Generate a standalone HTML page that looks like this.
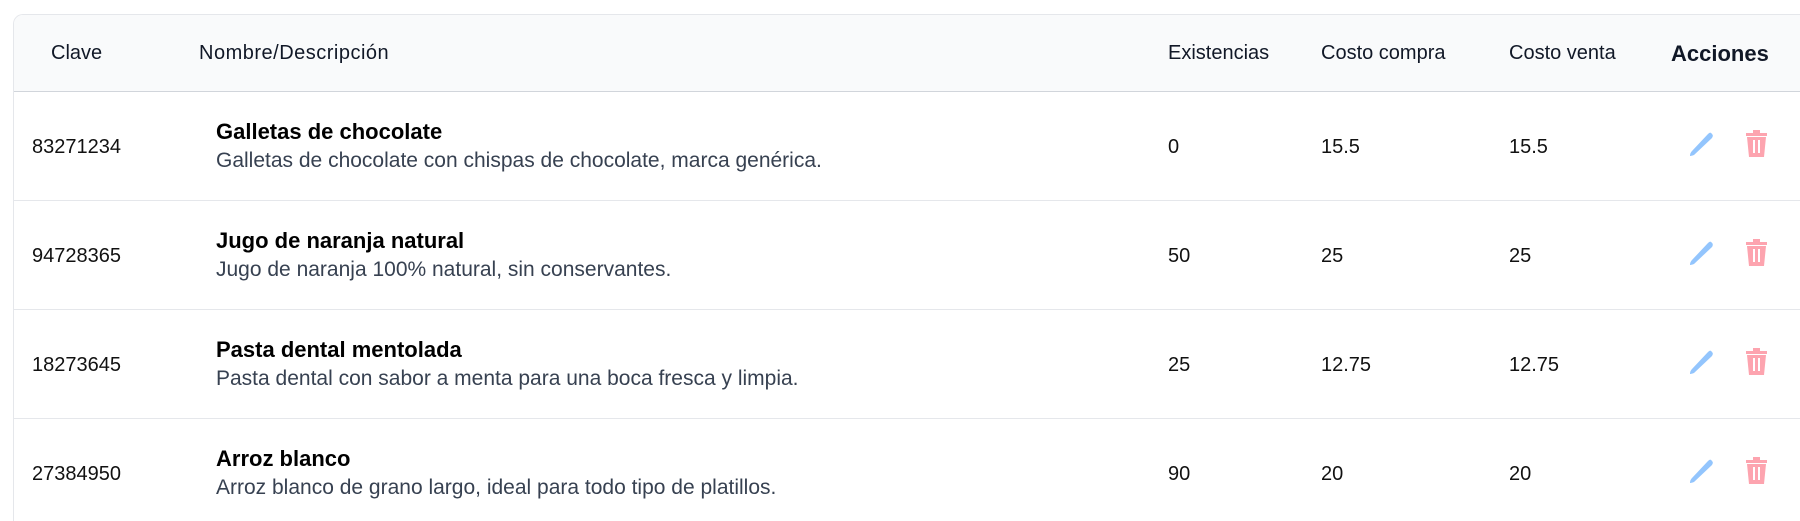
<!DOCTYPE html>
<html><head><meta charset="utf-8"><style>
html,body{margin:0;padding:0;background:#fff;width:1800px;height:521px;overflow:hidden;font-family:"Liberation Sans",sans-serif;color:#111}
.card{position:absolute;left:13px;top:14px;width:1795px;height:506px;border:1px solid #e5e7eb;border-bottom:none;border-radius:10px 10px 0 0;overflow:hidden}
.head{position:absolute;left:0;top:0;width:100%;height:76px;background:#f9fafb;border-bottom:1px solid #d1d5db}
.t{position:absolute;white-space:nowrap}
.h{font-size:20px;top:27px;color:#111827}
.row{position:absolute;left:0;width:100%;height:108px;border-bottom:1px solid #e5e7eb}
.c{font-size:20px;top:44px}
.ti{font-size:22px;top:27px;color:#000;font-weight:bold}
.de{font-size:21px;top:57px;color:#374151}
svg{position:absolute}
</style></head><body>
<div class="card">
<div class="head">
<div class="t h" style="left:37px">Clave</div>
<div class="t h" style="left:185px;letter-spacing:0.5px">Nombre/Descripción</div>
<div class="t h" style="left:1154px">Existencias</div>
<div class="t h" style="left:1307px">Costo compra</div>
<div class="t h" style="left:1495px">Costo venta</div>
<div class="t h" style="left:1657px;font-weight:bold;font-size:22px;top:26px">Acciones</div>
</div>
<div class="row" style="top:77px"><div class="t c" style="left:18px">83271234</div><div class="t ti" style="left:202px">Galletas de chocolate</div><div class="t de" style="left:202px">Galletas de chocolate con chispas de chocolate, marca genérica.</div><div class="t c" style="left:1154px">0</div><div class="t c" style="left:1307px">15.5</div><div class="t c" style="left:1495px">15.5</div>
<svg style="left:1675px;top:39px" width="26" height="26" viewBox="0 0 26 26"><path d="M22 2 Q25 4 23 7 L5 24 Q2 25 1 25 Q1 22 3 20 L19 3 Q21 1 22 2Z" fill="#93c5fd"/></svg>
<svg style="left:1731px;top:37px" width="23" height="30" viewBox="0 0 23 30"><path d="M8 1h7v3h7v3H1V4h7z" fill="#fda4af"/><path d="M2 8h19l-2 20H4z" fill="#fda4af"/><rect x="8" y="11" width="2" height="13" fill="#fff"/><rect x="13" y="11" width="2" height="13" fill="#fff"/></svg></div>
<div class="row" style="top:186px"><div class="t c" style="left:18px">94728365</div><div class="t ti" style="left:202px">Jugo de naranja natural</div><div class="t de" style="left:202px">Jugo de naranja 100% natural, sin conservantes.</div><div class="t c" style="left:1154px">50</div><div class="t c" style="left:1307px">25</div><div class="t c" style="left:1495px">25</div>
<svg style="left:1675px;top:39px" width="26" height="26" viewBox="0 0 26 26"><path d="M22 2 Q25 4 23 7 L5 24 Q2 25 1 25 Q1 22 3 20 L19 3 Q21 1 22 2Z" fill="#93c5fd"/></svg>
<svg style="left:1731px;top:37px" width="23" height="30" viewBox="0 0 23 30"><path d="M8 1h7v3h7v3H1V4h7z" fill="#fda4af"/><path d="M2 8h19l-2 20H4z" fill="#fda4af"/><rect x="8" y="11" width="2" height="13" fill="#fff"/><rect x="13" y="11" width="2" height="13" fill="#fff"/></svg></div>
<div class="row" style="top:295px"><div class="t c" style="left:18px">18273645</div><div class="t ti" style="left:202px">Pasta dental mentolada</div><div class="t de" style="left:202px">Pasta dental con sabor a menta para una boca fresca y limpia.</div><div class="t c" style="left:1154px">25</div><div class="t c" style="left:1307px">12.75</div><div class="t c" style="left:1495px">12.75</div>
<svg style="left:1675px;top:39px" width="26" height="26" viewBox="0 0 26 26"><path d="M22 2 Q25 4 23 7 L5 24 Q2 25 1 25 Q1 22 3 20 L19 3 Q21 1 22 2Z" fill="#93c5fd"/></svg>
<svg style="left:1731px;top:37px" width="23" height="30" viewBox="0 0 23 30"><path d="M8 1h7v3h7v3H1V4h7z" fill="#fda4af"/><path d="M2 8h19l-2 20H4z" fill="#fda4af"/><rect x="8" y="11" width="2" height="13" fill="#fff"/><rect x="13" y="11" width="2" height="13" fill="#fff"/></svg></div>
<div class="row" style="top:404px;border-bottom:none"><div class="t c" style="left:18px">27384950</div><div class="t ti" style="left:202px">Arroz blanco</div><div class="t de" style="left:202px">Arroz blanco de grano largo, ideal para todo tipo de platillos.</div><div class="t c" style="left:1154px">90</div><div class="t c" style="left:1307px">20</div><div class="t c" style="left:1495px">20</div>
<svg style="left:1675px;top:39px" width="26" height="26" viewBox="0 0 26 26"><path d="M22 2 Q25 4 23 7 L5 24 Q2 25 1 25 Q1 22 3 20 L19 3 Q21 1 22 2Z" fill="#93c5fd"/></svg>
<svg style="left:1731px;top:37px" width="23" height="30" viewBox="0 0 23 30"><path d="M8 1h7v3h7v3H1V4h7z" fill="#fda4af"/><path d="M2 8h19l-2 20H4z" fill="#fda4af"/><rect x="8" y="11" width="2" height="13" fill="#fff"/><rect x="13" y="11" width="2" height="13" fill="#fff"/></svg></div>
</div>
</body></html>
